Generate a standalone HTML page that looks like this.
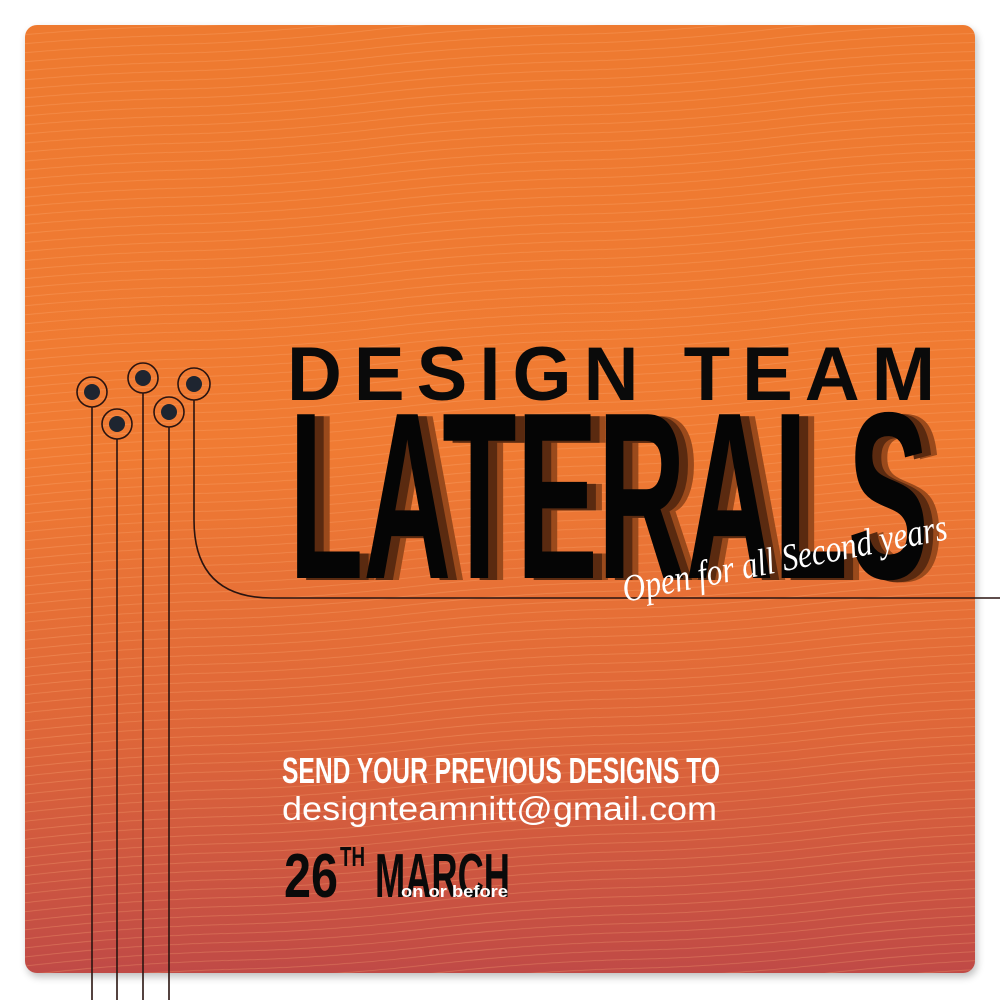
<!DOCTYPE html>
<html><head><meta charset="utf-8"><style>
html,body{margin:0;padding:0;background:#fff;width:1000px;height:1000px;overflow:hidden}
</style></head><body>
<svg width="1000" height="1000" viewBox="0 0 1000 1000" xmlns="http://www.w3.org/2000/svg" style="position:absolute;left:0;top:0">
<defs>
<linearGradient id="g" x1="0" y1="0" x2="0" y2="1">
<stop offset="0" stop-color="#ee7a30"/>
<stop offset="0.45" stop-color="#f07b33"/>
<stop offset="0.75" stop-color="#de6639"/>
<stop offset="1" stop-color="#c04a46"/>
</linearGradient>
<filter id="sh" x="-5%" y="-5%" width="110%" height="110%"><feGaussianBlur stdDeviation="4"/></filter>
<clipPath id="c"><rect x="25" y="25" width="950" height="948" rx="12"/></clipPath>
<pattern id="w" width="400" height="9" patternUnits="userSpaceOnUse">
<path d="M0 4.5 Q100 0 200 4.5 T400 4.5" fill="none" stroke="#ffb07a" stroke-opacity="0.35" stroke-width="0.8"/>
</pattern>
</defs>
<rect x="27" y="29" width="950" height="948" rx="12" fill="#000" opacity="0.25" filter="url(#sh)"/>
<rect x="25" y="25" width="950" height="948" rx="12" fill="url(#g)"/>
<g clip-path="url(#c)"><rect x="-200" y="-200" width="1400" height="1400" fill="url(#w)" transform="rotate(-4 500 500)"/></g>
<g stroke="#2a1410" stroke-width="1.6" fill="none">
<line x1="92" y1="407" x2="92" y2="1000"/>
<line x1="117" y1="439" x2="117" y2="1000"/>
<line x1="143" y1="393" x2="143" y2="1000"/>
<line x1="169" y1="427" x2="169" y2="1000"/>
<path d="M194 400 V520 Q194 598 272 598 H1000"/>
<circle cx="92" cy="392" r="15"/><circle cx="117" cy="424" r="15"/><circle cx="143" cy="378" r="15"/><circle cx="169" cy="412" r="15"/><circle cx="194" cy="384" r="16"/>
</g>
<g fill="#1e2530">
<circle cx="92" cy="392" r="8"/><circle cx="117" cy="424" r="8"/><circle cx="143" cy="378" r="8"/><circle cx="169" cy="412" r="8"/><circle cx="194" cy="384" r="8"/>
</g>
<g font-family="Liberation Sans, sans-serif" font-weight="bold">
<text x="287" y="400" font-size="76" textLength="648" lengthAdjust="spacing" fill="#0a0a0a">DESIGN TEAM</text>
<text x="304" y="580" font-size="238" textLength="640" lengthAdjust="spacingAndGlyphs" fill="#9a4a1c">LATERALS</text>
<text x="298" y="580" font-size="238" textLength="640" lengthAdjust="spacingAndGlyphs" fill="#5a2a10">LATERALS</text>
<text x="289" y="578" font-size="238" textLength="640" lengthAdjust="spacingAndGlyphs" fill="#050505">LATERALS</text>
</g>
<text x="625" y="602" font-family="Liberation Serif, serif" font-style="italic" font-size="38" fill="#fff" textLength="330" lengthAdjust="spacingAndGlyphs" transform="rotate(-11 625 602)">Open for all Second years</text>
<text x="282" y="783" font-family="Liberation Sans, sans-serif" font-weight="bold" font-size="36" fill="#fff" textLength="438" lengthAdjust="spacingAndGlyphs">SEND YOUR PREVIOUS DESIGNS TO</text>
<text x="282" y="820" font-family="Liberation Sans, sans-serif" font-size="33" fill="#fff" textLength="435" lengthAdjust="spacingAndGlyphs">designteamnitt@gmail.com</text>
<text x="284" y="897" font-family="Liberation Sans, sans-serif" font-weight="bold" font-size="62" fill="#0a0a0a" textLength="54" lengthAdjust="spacingAndGlyphs">26</text>
<text x="340" y="866" font-family="Liberation Sans, sans-serif" font-weight="bold" font-size="28" fill="#0a0a0a" textLength="25" lengthAdjust="spacingAndGlyphs">TH</text>
<text x="375" y="897" font-family="Liberation Sans, sans-serif" font-weight="bold" font-size="62" fill="#0a0a0a" textLength="135" lengthAdjust="spacingAndGlyphs">MARCH</text>
<text x="401" y="897" font-family="Liberation Sans, sans-serif" font-weight="bold" font-size="17" fill="#fff" textLength="107" lengthAdjust="spacingAndGlyphs">on or before</text>
</svg>
</body></html>
